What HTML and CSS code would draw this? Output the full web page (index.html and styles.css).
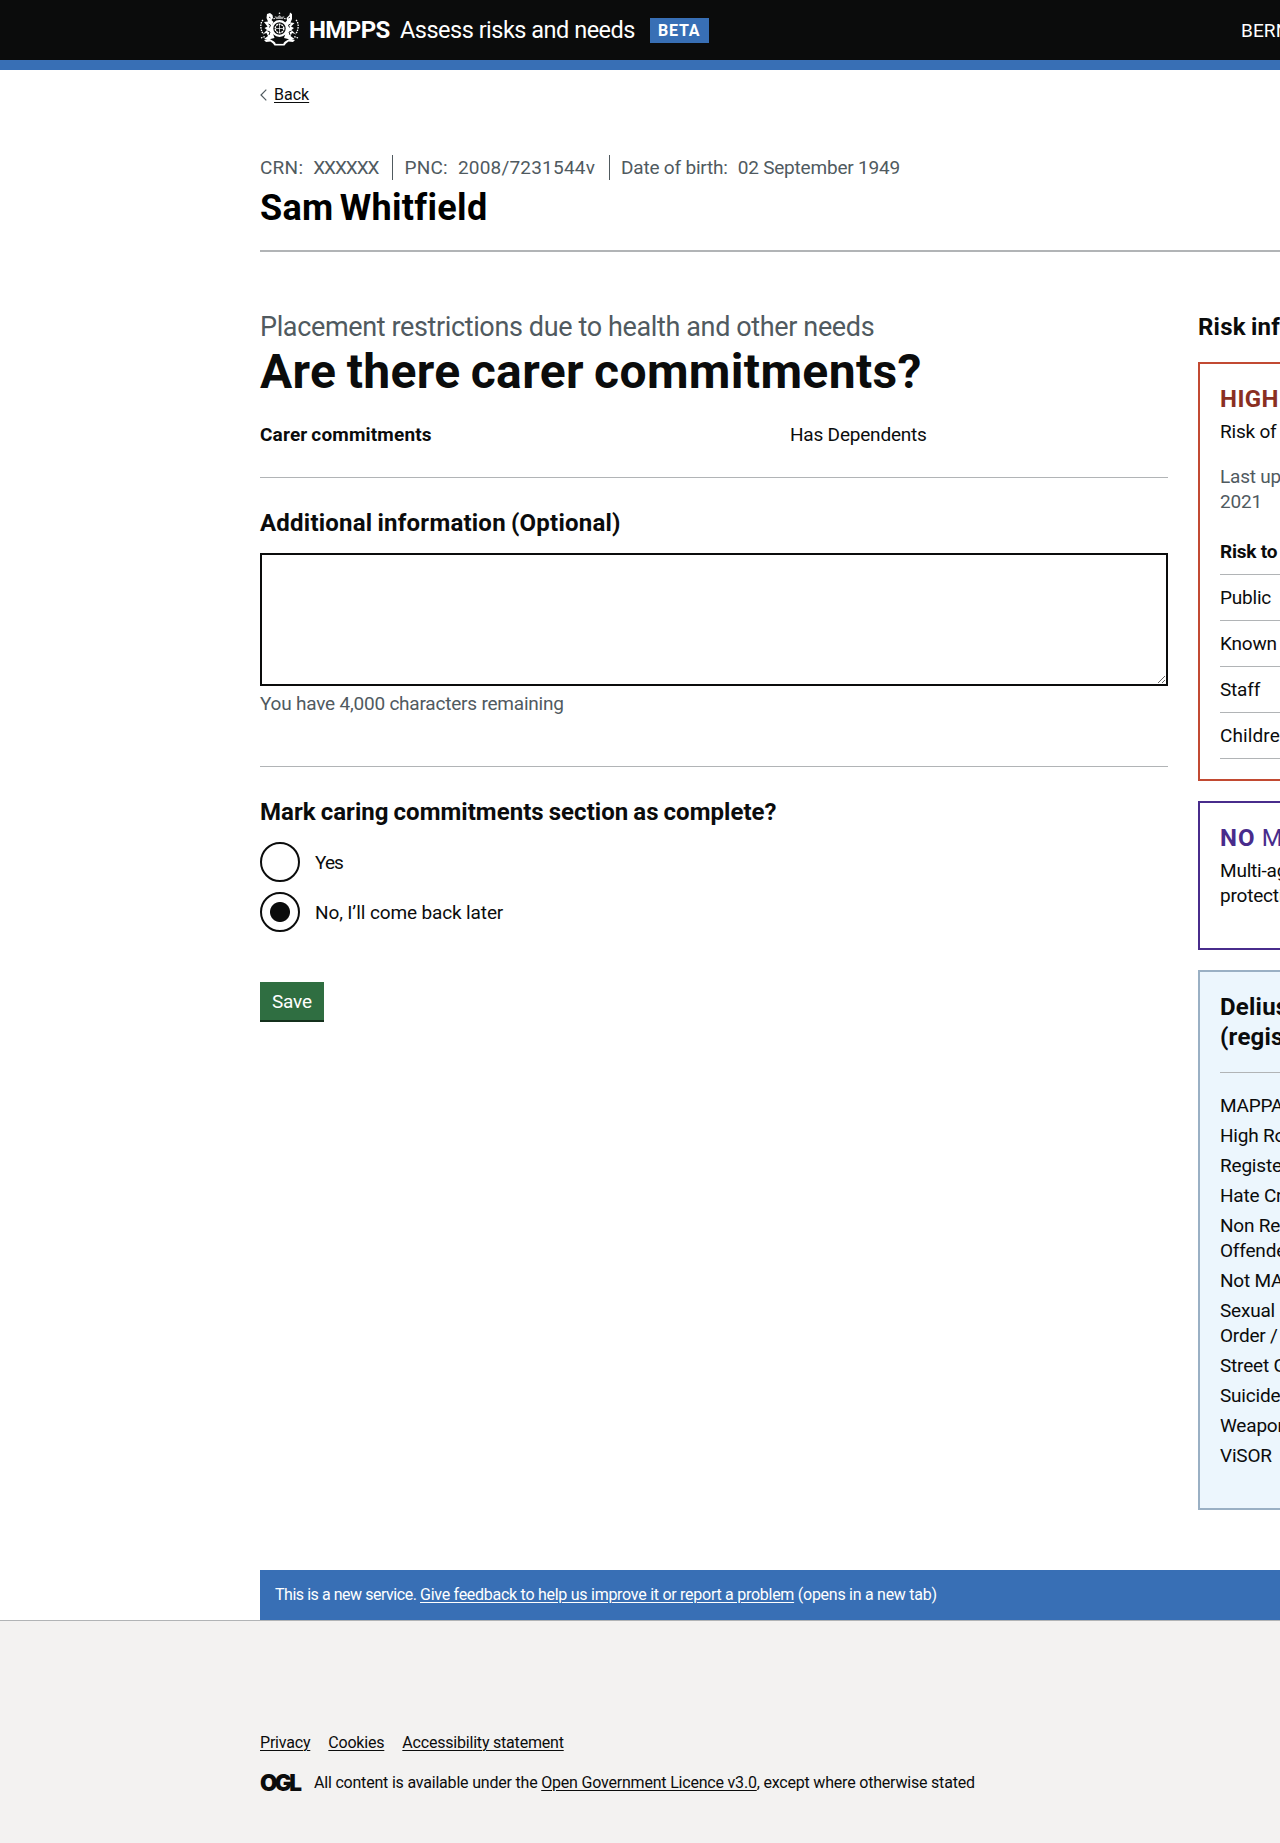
FILE: index.html
```html
<!DOCTYPE html>
<html lang="en">
<head>
<meta charset="utf-8">
<title>Are there carer commitments? - Assess risks and needs</title>
<link rel="stylesheet" href="styles.css">
</head>
<body>
<div class="page">
  <header class="header">
    <div class="container header-inner">
      <div class="brand">
        <svg class="crest" viewBox="0 0 39 34" aria-hidden="true">
          <g fill="#fff">
            <circle cx="19.5" cy="1.2" r=".8"/>
            <path d="M16 7l-1.500-3 2.800 1 2.200-2 2.200 2 2.800-1-1.500 3z" opacity=".6"/>
            <path d="M7 2l3-1 2.500 2 .5 3-1.500 2 2 2-1.500 3 .5 5 1 5 1 3-4 1H4l4-3-1.500-3-3.500 1 4-4-2.500-2 3-1.500L4 10l4-.5L6.500 6z"/>
            <path d="M32 2l-2-1.500-.5 2.500-3 3 .5 2.500-2 2 1.500 2.500-.5 5-1 5-1 3 4 1h6.500l-4-3 1.500-3 3.500 1-4-4 2.500-2-3-1.500 3.500-3.500-4-.5 1.500-3.500z"/>
            <path d="M4 28l5-1.500 5 3 1.500 1.500h8l1.500-1.500 5-3 5 1.500-2 2-4.500-.5-2.500 2-1.500 2h-10l-1.500-2-2.500-2-4.500.5z"/>
          </g>
          <g fill="none" stroke="#fff">
            <circle cx="19.500" cy="16.500" r="7.300" fill="#0b0c0c" stroke-width="2.200"/>
            <circle cx="19.500" cy="16.500" r="4.300" stroke-width="1.400" stroke-dasharray="2 .7"/>
            <path d="M19.500 12.500v8M15.500 16.500h8" opacity=".7"/>
            <path d="M3 8c-2 2-2.500 5-2 8s1 5 3 6M36 8c2 2 2.500 5 2 8s-1 5-3 6M1 26l4-1.500M38 26l-4-1.500M13.500 7l1.500-1M25.500 7l-1.500-1" stroke-width="1.300" stroke-dasharray="1.500 1"/>
          </g>
          <path d="M9 5l1.500 1M8.500 12l2 1-1 2.500M7.500 19l2.500 1-1 3M30 5l-1.500 1M30.500 12l-2 1 1 2.500M31.500 19l-2.500 1 1 3M15.500 31.500h8" stroke="#0b0c0c" fill="none" stroke-width=".9"/>
        </svg>
        <strong class="org">HMPPS</strong>
        <span class="service">Assess risks and needs</span>
        <strong class="tag">BETA</strong>
      </div>
      <span class="user">BERNARD BEAKS</span>
    </div>
  </header>
  <div class="container">
    <a class="back" href="#"><svg class="chevron" viewBox="0 0 7 12" aria-hidden="true"><path d="M6.300.7 1 6l5.300 5.300" fill="none" stroke="#505a5f" stroke-width="1.200"/></svg><span class="link">Back</span></a>
    <section class="person">
      <ul class="ids">
        <li><span>CRN:</span><span class="crn">XXXXXX</span></li>
        <li><span>PNC:</span><span class="pnc">2008/7231544v</span></li>
        <li><span class="dob">Date of birth:</span><span class="dob">02 September 1949</span></li>
      </ul>
      <h2 class="name">Sam Whitfield</h2>
    </section>
    <div class="columns">
      <main class="main">
        <p class="caption">Placement restrictions due to health and other needs</p>
        <h1 class="title">Are there carer commitments?</h1>
        <dl class="summary"><dt>Carer commitments</dt><dd>Has Dependents</dd></dl>
        <section class="question">
          <h2 class="heading">Additional information (Optional)</h2>
          <textarea class="textarea"></textarea>
          <p class="hint">You have 4,000 characters remaining</p>
        </section>
        <section class="complete">
          <h2 class="heading heading-complete">Mark caring commitments section as complete?</h2>
          <label class="radio"><span class="dot"></span><span class="yes">Yes</span></label>
          <label class="radio"><span class="dot checked"></span><span class="no">No, I’ll come back later</span></label>
          <button class="save">Save</button>
        </section>
      </main>
      <aside class="aside">
        <h2 class="heading">Risk information</h2>
        <section class="card card-risk">
          <h3 class="level">HIGH RoSH</h3>
          <p>Risk of serious harm</p>
          <p class="updated">Last updated: 24 May<br>2021</p>
          <ul class="rows"><li><b>Risk to</b></li><li>Public</li><li>Known Adult</li><li>Staff</li><li class="children">Children</li></ul>
        </section>
        <section class="card card-mappa">
          <h3 class="level"><b>NO</b> MAPPA</h3>
          <p>Multi-agency public<br>protection arrangements</p>
        </section>
        <section class="card card-delius">
          <h3 class="heading">Delius<br>(registers)</h3>
          <ul class="flags"><li>MAPPA</li><li>High RoSH</li><li>Registered</li><li>Hate Crime</li><li>Non Registered<br>Offender</li><li>Not MAPPA</li><li>Sexual Harm<br>Order / Notice</li><li>Street Gangs</li><li>Suicide</li><li>Weapons</li><li>ViSOR</li></ul>
        </section>
      </aside>
    </div>
    <p class="feedback"><span class="feedback-lead">This is a new service. </span><a class="link" href="#">Give feedback to help us improve it or report a problem</a> (opens in a new tab)</p>
  </div>
  <footer class="footer">
    <div class="container">
      <nav class="links"><a href="#" class="link">Privacy</a><a href="#" class="link">Cookies</a><a href="#" class="link">Accessibility statement</a></nav>
      <div class="licence"><strong class="ogl">OGL</strong><p>All content is available under the <a href="#" class="link">Open Government Licence v3.0</a>, except where otherwise stated</p></div>
    </div>
  </footer>
</div>
</body>
</html>
```
FILE: styles.css
```css
* { box-sizing: border-box; }
html { overflow: hidden; }
body { margin: 0; overflow: hidden; background: #fff; color: #0b0c0c; font: 19px/25px Roboto, sans-serif; letter-spacing: -.2px; }
h1, h2, h3, p, ul, dl, dd { margin: 0; padding: 0; }
ul { list-style: none; }
a { color: inherit; }
.page { width: 1740px; height: 1843px; overflow: hidden; display: flex; flex-direction: column; }
.container { width: 1220px; margin: 0 auto; }
.link { text-decoration: underline; text-decoration-thickness: 1px; text-underline-offset: 2px; }

.header { background: #0b0c0c; border-bottom: 10px solid #386fb5; color: #fff; }
.header-inner { display: flex; align-items: center; height: 60px; line-height: 30px; }
.brand { display: flex; align-items: center; width: 981px; font-size: 24px; white-space: nowrap; }
.crest { width: 39px; height: 34px; margin: -2px 9px 0 0; }
.org { width: 91px; padding-left: 1px; letter-spacing: -.6px; }
.service { width: 251px; padding-left: 1px; font-size: 23.5px; letter-spacing: -.5px; }
.tag { width: 59px; background: #386fb5; font-size: 16px; line-height: 25px; text-indent: 8px; letter-spacing: .8px; }
.user { letter-spacing: .1px; padding-top: 1px; }

.back { display: flex; align-items: center; gap: 7px; margin-top: 15px; font-size: 16px; line-height: 20px; text-decoration: none; letter-spacing: 0; }
.chevron { width: 7px; height: 12px; }

.person { margin-top: 50px; padding-bottom: 22px; border-bottom: 2px solid #b1b4b6; }
.ids { display: flex; color: #505a5f; letter-spacing: .25px; }
.ids li { display: flex; gap: 10px; }
.ids li + li { margin-left: 14px; padding-left: 11px; border-left: 1px solid #505a5f; }
.crn { letter-spacing: -1.05px; }
.pnc { letter-spacing: .2px; }
.dob { letter-spacing: -.2px; }
.name { margin-top: 8px; font-size: 36px; line-height: 40px; color: #000; letter-spacing: .3px; word-spacing: -3px; }

.columns { display: grid; grid-template-columns: 908px 282px; gap: 30px; margin-top: 60px; }
.caption { font-size: 27px; line-height: 30px; color: #505a5f; letter-spacing: -.37px; }
.title { margin-top: 5px; font-size: 48px; line-height: 50px; letter-spacing: .35px; word-spacing: -2px; }
.summary { display: flex; margin-top: 25px; padding-bottom: 30px; border-bottom: 1px solid #b1b4b6; }
.summary dt { width: 530px; font-weight: 700; letter-spacing: .17px; word-spacing: -1px; }
.heading { font-size: 24px; line-height: 30px; font-weight: 700; letter-spacing: .22px; word-spacing: -1px; }
.heading-complete { letter-spacing: .04px; }
.question { padding: 30px 0 50px; border-bottom: 1px solid #b1b4b6; }
.textarea { display: block; width: 100%; height: 133px; margin: 15px 0 5px; border: 2px solid #0b0c0c; }
.hint { color: #505a5f; letter-spacing: -.21px; }
.complete { padding-top: 30px; }
.radio { display: flex; align-items: center; gap: 15px; margin-top: 10px; }
.heading + .radio { margin-top: 15px; letter-spacing: -.9px; word-spacing: 0; }
.yes { letter-spacing: -.9px; }
.no { letter-spacing: -.13px; }
.dot { width: 40px; height: 40px; border: 2px solid #0b0c0c; border-radius: 50%; }
.checked { background: radial-gradient(circle, #0b0c0c 9.5px, transparent 10.5px); }
.save { display: block; margin-top: 50px; border: 0; padding: 7px 12px 6px; background: #2f6e41; color: #fff; font: inherit; letter-spacing: -.2px; box-shadow: 0 2px 0 #14301c; }

.card { margin-top: 20px; border: 2px solid; padding: 20px; white-space: nowrap; }
.level { font-size: 24px; line-height: 30px; margin-bottom: 5px; letter-spacing: .43px; }
.card-risk { border-color: #c24a32; }
.card-risk .level { color: #8a2f22; }
.card .updated { margin: 20px 0 15px; color: #505a5f; }
.rows li { padding: 10px 0; border-bottom: 1px solid #b1b4b6; }
.rows .children { letter-spacing: .1px; }
.card-mappa { border-color: #482c8c; padding-bottom: 40px; }
.card-mappa .level { color: #482c8c; font-weight: 400; }
.card-mappa b { letter-spacing: 1px; }
.card-delius { border-color: #9ab0c4; background: #ecf6fd; padding-bottom: 40px; }
.card-delius .heading { padding-bottom: 20px; border-bottom: 1px solid #b1b4b6; }
.flags { display: grid; gap: 5px; margin-top: 20px; }

.feedback { margin-top: 60px; padding: 15px; background: #386fb5; color: #fff; font-size: 16px; line-height: 20px; letter-spacing: -.27px; }
.feedback-lead { letter-spacing: -.46px; }
.footer { flex: 1; border-top: 1px solid #b1b4b6; background: #f3f2f1; padding-top: 112px; font-size: 16px; line-height: 20px; }
.links { display: flex; gap: 18px; }
.licence { display: flex; align-items: center; gap: 13px; margin-top: 20px; }
.ogl { width: 41px; font: 900 22.5px/20px Inter, sans-serif; letter-spacing: -2.600px; }
```
